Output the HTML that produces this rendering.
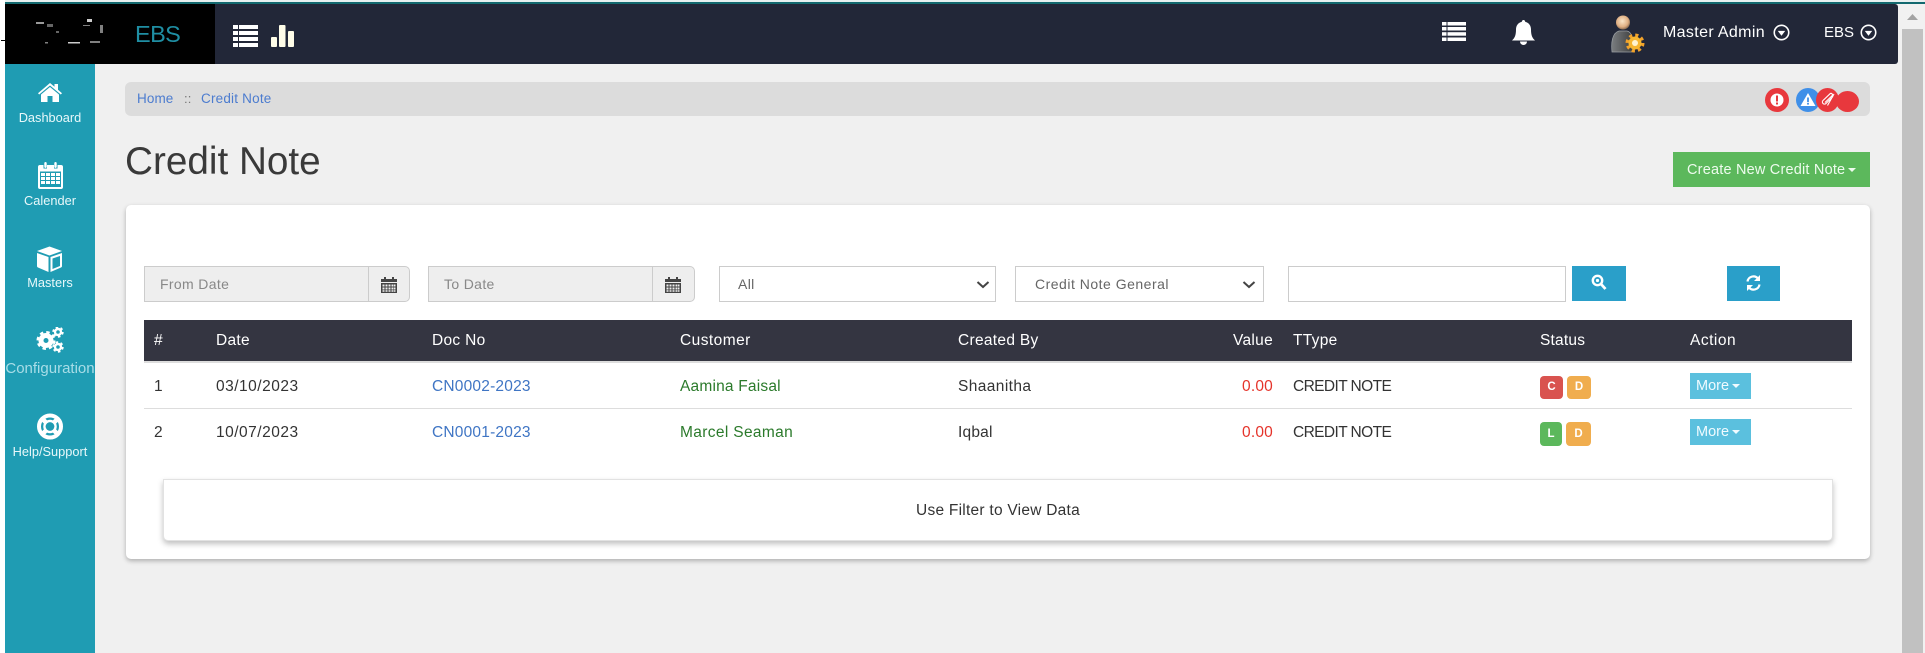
<!DOCTYPE html>
<html>
<head>
<meta charset="utf-8">
<title>Credit Note</title>
<style>
html,body{margin:0;padding:0;width:1925px;height:653px;overflow:hidden;background:#f0f0f0;font-family:"Liberation Sans",sans-serif;color:#333}
div,a,span.t,svg{position:absolute}
.t{position:absolute;white-space:nowrap;line-height:20px;height:20px;font-size:15.5px;letter-spacing:.2px}
.box{box-sizing:border-box}
.side{color:#e8f8fa;font-size:12.8px;text-align:center;left:5px;width:90px;letter-spacing:0}
.th{color:#fff;font-size:15.5px;letter-spacing:.3px}
.inp{box-sizing:border-box;background:#eee;border:1px solid #ccc;height:36px;top:266px}
.sel{box-sizing:border-box;background:#fff;border:1px solid #ccc;height:36px;top:266px}
.ph{color:#888;font-size:14px;letter-spacing:.35px}
.bdg{border-radius:4px;color:#fff;font-size:11.5px;font-weight:bold;text-align:center;box-sizing:border-box}
.more{background:#5bc0de;color:#f0fbff;font-size:14.5px;left:1690px;width:61px;height:26px;line-height:27px;padding-left:6px;box-sizing:border-box;white-space:nowrap}
.caret{display:inline-block;width:0;height:0;border-left:4px solid transparent;border-right:4px solid transparent;border-top:4px solid currentColor;vertical-align:2px;margin-left:3px}
.blue{background:#2a9fc9;top:266px;height:36px}
</style>
</head>
<body>
<!-- top strip -->
<div style="left:0;top:0;width:1925px;height:2px;background:#e8f0f0"></div>
<div style="left:5px;top:2px;width:1920px;height:2px;background:#13696f"></div>
<div style="left:0;top:0;width:5px;height:653px;background:#fff"></div>

<!-- navbar -->
<div style="left:5px;top:4px;width:1893px;height:60px;background:#222738;border-radius:0 3px 3px 0"></div>
<div style="left:5px;top:4px;width:210px;height:60px;background:#000"></div>
<div style="left:1px;top:40px;width:6px;height:1px;background:#000"></div>
<svg style="left:30px;top:15px" width="80" height="35" viewBox="0 0 80 35">
<g fill="#fff"><rect x="6" y="7" width="8" height="2" opacity=".6"/><rect x="17" y="9" width="6" height="3" opacity=".4"/><rect x="57" y="4" width="5" height="3" opacity=".8"/><rect x="53" y="10" width="7" height="1" opacity=".5"/><rect x="70" y="10" width="3" height="8" opacity=".5"/><rect x="38" y="27" width="12" height="1.5" opacity=".8"/><rect x="15" y="27" width="3" height="1.5" opacity=".5"/><rect x="60" y="26" width="10" height="2" opacity=".5"/><rect x="26" y="16" width="3" height="2" opacity=".4"/></g>
</svg>
<span class="t" style="left:135px;top:24px;font-size:23.5px;color:#1f8ea3;letter-spacing:-.6px">EBS</span>

<svg style="left:233px;top:25px" width="25" height="22" viewBox="0 0 25 22" fill="#fff">
<rect x="0" y="0" width="5" height="4"/><rect x="6" y="0" width="19" height="4"/>
<rect x="0" y="6" width="5" height="4"/><rect x="6" y="6" width="19" height="4"/>
<rect x="0" y="12" width="5" height="4"/><rect x="6" y="12" width="19" height="4"/>
<rect x="0" y="18" width="5" height="4"/><rect x="6" y="18" width="19" height="4"/>
</svg>
<svg style="left:271px;top:25px" width="23" height="22" viewBox="0 0 23 22" fill="#fffde8">
<rect x="0" y="12" width="6" height="10" rx="1"/><rect x="8" y="0" width="6.5" height="22" rx="1"/><rect x="17" y="6" width="6" height="16" rx="1"/>
</svg>

<svg style="left:1442px;top:22px" width="24" height="19" viewBox="0 0 24 19" fill="#fff">
<rect x="0" y="0" width="4.5" height="3.5"/><rect x="5.5" y="0" width="18.5" height="3.5"/>
<rect x="0" y="5" width="4.5" height="3.5"/><rect x="5.5" y="5" width="18.5" height="3.5"/>
<rect x="0" y="10.2" width="4.5" height="3.5"/><rect x="5.5" y="10.2" width="18.5" height="3.5"/>
<rect x="0" y="15.5" width="4.5" height="3.5"/><rect x="5.5" y="15.5" width="18.5" height="3.5"/>
</svg>
<svg style="left:1512px;top:20px" width="23" height="25" viewBox="0 0 23 25" fill="#fff">
<path d="M11.5 0a1.7 1.7 0 0 1 1.7 1.9C17 2.7 19 5.8 19 9.5c0 6 1.4 8.500 4 11H0c2.600-2.500 4-5 4-11 0-3.700 2-6.800 5.800-7.600A1.700 1.700 0 0 1 11.500 0z"/>
<path d="M8 21.500h7a3.500 3.500 0 0 1-7 0z"/>
</svg>

<svg style="left:1611px;top:15px" width="36" height="41" viewBox="0 0 36 41">
<defs>
<radialGradient id="hd" cx=".45" cy=".4" r=".6"><stop offset="0" stop-color="#fbe6c8"/><stop offset=".7" stop-color="#dfae82"/><stop offset="1" stop-color="#8a6b50"/></radialGradient>
<linearGradient id="bd" x1="0" y1="0" x2="1" y2="0"><stop offset="0" stop-color="#7a7d80"/><stop offset="1" stop-color="#3c3d3d"/></linearGradient>
</defs>
<circle cx="12" cy="7.500" r="7" fill="url(#hd)"/>
<path d="M1 37c-1-9 0-19 7-21h8c5 1 7 8 7 21z" fill="url(#bd)" stroke="#9a9ea2" stroke-width=".7"/>
<circle cx="24" cy="28" r="7.500" fill="none" stroke="#f2a22a" stroke-width="4" stroke-dasharray="3 2.890"/>
<circle cx="24" cy="28" r="6.500" fill="#f6b632"/>
<circle cx="24" cy="28" r="3" fill="#fff3d0"/>
</svg>
<span class="t" style="left:1663px;top:23px;color:#fff;font-size:16px;letter-spacing:.35px">Master Admin</span>
<svg style="left:1773px;top:24px" width="17" height="17" viewBox="0 0 16 16"><circle cx="8" cy="8" r="6.800" fill="none" stroke="#fff" stroke-width="1.500"/><path d="M4.500 6.500h7L8 11z" fill="#fff"/></svg>
<span class="t" style="left:1824px;top:23px;color:#fff;font-size:15px;letter-spacing:0">EBS</span>
<svg style="left:1860px;top:24px" width="17" height="17" viewBox="0 0 16 16"><circle cx="8" cy="8" r="6.800" fill="none" stroke="#fff" stroke-width="1.500"/><path d="M4.500 6.500h7L8 11z" fill="#fff"/></svg>

<!-- scrollbar -->
<div style="left:1900px;top:4px;width:25px;height:649px;background:#f1f1f1"></div>
<div style="left:1902px;top:29px;width:21px;height:624px;background:#c1c1c1"></div>
<svg style="left:1904px;top:13px" width="17" height="8" viewBox="0 0 17 8"><path d="M8.500 1L14 7H3z" fill="#a3a3a3"/></svg>

<!-- sidebar -->
<div style="left:5px;top:64px;width:90px;height:589px;background:#1f9cb3"></div>
<svg style="left:38px;top:83px" width="24" height="19" viewBox="0 0 24 19" fill="#fff">
<path d="M12 0L16.500 3.800V1H20V6.800L24 10.200 22.800 11.500 12 2.500 1.200 11.500 0 10.200z"/>
<path d="M12 4L21 11.500V19H14.500V13H9.500V19H3V11.500z"/>
</svg>
<span class="t side" style="top:108px">Dashboard</span>
<svg style="left:38px;top:162px" width="25" height="27" viewBox="0 0 25 27" fill="#fff">
<path fill-rule="evenodd" d="M2 3H5.500V6.500H9V3H16V6.500H19.500V3H23A2 2 0 0 1 25 5V25A2 2 0 0 1 23 27H2A2 2 0 0 1 0 25V5A2 2 0 0 1 2 3ZM2 9.500V25H23V9.500Z"/>
<rect x="6.300" y="0" width="2.400" height="6" rx="1.200"/><rect x="16.300" y="0" width="2.400" height="6" rx="1.200"/>
<path d="M3 11h4v3H3zM8 11h4v3H8zM13 11h4v3h-4zM18 11h4v3h-4zM3 15h4v3H3zM8 15h4v3H8zM13 15h4v3h-4zM18 15h4v3h-4zM3 19h4v3H3zM8 19h4v3H8zM13 19h4v3h-4zM18 19h4v3h-4z"/>
</svg>
<span class="t side" style="top:191px">Calender</span>
<svg style="left:37px;top:246px" width="25" height="26" viewBox="0 0 25 26" fill="#fff">
<path d="M12.500 0L25 4.500 12.500 9 0 4.500z" transform="translate(0 .5)"/>
<path d="M0 7L11.500 11V26L1 21.500A1.500 1.500 0 0 1 0 20zM25 7L13.500 11V26L24 21.500A1.500 1.500 0 0 0 25 20z"/>
<path d="M15.500 12.500L23 10V20L15.500 23z" fill="#1f9cb3"/>
</svg>
<span class="t side" style="top:273px">Masters</span>
<svg style="left:36px;top:327px" width="28" height="26" viewBox="0 0 28 26">
<circle cx="10" cy="13.500" r="5" fill="none" stroke="#fff" stroke-width="5"/>
<circle cx="10" cy="13.500" r="8.200" fill="none" stroke="#fff" stroke-width="2.600" stroke-dasharray="3.400 3.040"/>
<circle cx="22" cy="5" r="3" fill="none" stroke="#fff" stroke-width="2.400"/>
<circle cx="22" cy="5" r="4.800" fill="none" stroke="#fff" stroke-width="1.800" stroke-dasharray="2.500 2.530"/>
<circle cx="22" cy="20" r="3" fill="none" stroke="#fff" stroke-width="2.400"/>
<circle cx="22" cy="20" r="4.800" fill="none" stroke="#fff" stroke-width="1.800" stroke-dasharray="2.500 2.530"/>
</svg>
<span class="t side" style="top:359px;color:#a8dde7;font-size:15px">Configuration</span>
<svg style="left:37px;top:413px" width="26" height="27" viewBox="0 0 26 26">
<circle cx="13" cy="13" r="11" fill="none" stroke="#fff" stroke-width="4"/>
<circle cx="13" cy="13" r="5.500" fill="none" stroke="#fff" stroke-width="2.500"/>
<g stroke="#fff" stroke-width="4.500"><path d="M5 5L9 9M21 5L17 9M5 21L9 17M21 21L17 17"/></g>
<circle cx="13" cy="13" r="4.300" fill="#1f9cb3"/>
</svg>
<span class="t side" style="top:442px">Help/Support</span>

<!-- breadcrumb -->
<div style="left:125px;top:82px;width:1745px;height:34px;background:#dcdcdc;border-radius:6px"></div>
<span class="t" style="left:137px;top:89px;font-size:13.5px;letter-spacing:.1px;color:#4c7ccf">Home</span>
<span class="t" style="left:184px;top:89px;font-size:13px;color:#777">::</span>
<span class="t" style="left:201px;top:89px;font-size:13.5px;letter-spacing:.2px;color:#4c7ccf">Credit Note</span>

<div style="left:1765px;top:88px;width:24px;height:24px;border-radius:50%;background:#e8383d"></div>
<svg style="left:1770px;top:93px" width="14" height="14" viewBox="0 0 14 14"><circle cx="7" cy="7" r="6.500" fill="#fff"/><rect x="6" y="2.500" width="2" height="6" fill="#e8383d"/><rect x="6" y="9.500" width="2" height="2" fill="#e8383d"/></svg>
<div style="left:1796px;top:88px;width:24px;height:24px;border-radius:50%;background:#3f8fe8"></div>
<svg style="left:1800px;top:92px" width="16" height="15" viewBox="0 0 16 15"><path d="M8 1L15.500 14H.5z" fill="#fff"/><rect x="7.100" y="5.500" width="1.800" height="4.500" fill="#3f8fe8"/><rect x="7.100" y="10.800" width="1.800" height="1.800" fill="#3f8fe8"/></svg>
<div style="left:1836px;top:91px;width:23px;height:21px;border-radius:50%;background:#e8383d"></div>
<div style="left:1816px;top:88px;width:23px;height:24px;border-radius:50%;background:#e8383d"></div>
<svg style="left:1820px;top:92px" width="15" height="15" viewBox="0 0 15 15"><path d="M13 4.500L6 11.500a2 2 0 0 1-3-3L10 1.800a1.200 1.200 0 0 1 2 2L5 10.500M14 2L7.500 13.500" fill="none" stroke="#fff" stroke-width="1.100"/></svg>

<!-- title -->
<span class="t" style="left:125px;top:142px;height:40px;line-height:40px;font-size:38.7px;letter-spacing:0;color:#3a3a3a;font-weight:normal">Credit Note</span>

<div class="box" style="left:1673px;top:152px;width:197px;height:35px;background:#5cb85c"></div>
<span class="t" style="left:1687px;top:160px;color:#eefbee;font-size:14.5px;letter-spacing:.2px">Create New Credit Note<span class="caret" style="position:static"></span></span>

<!-- card -->
<div class="box" style="left:126px;top:205px;width:1744px;height:354px;background:#fff;border-radius:5px;box-shadow:0 2px 5px rgba(0,0,0,.28)"></div>

<!-- filters -->
<div class="inp" style="left:144px;width:266px;border-radius:0 5px 5px 0"></div>
<div style="left:368px;top:266px;width:1px;height:36px;background:#ccc"></div>
<span class="t ph" style="left:160px;top:274px">From Date</span>
<svg style="left:381px;top:276px" width="16" height="17" viewBox="0 0 16 17" fill="#444"><path d="M0 3h3V1h2v2h6V1h2v2h3v3H0z"/><path fill-rule="evenodd" d="M0 7h16v10H0zM1.500 8.500v2h2v-2zM4.500 8.500v2h2v-2zM7.500 8.500v2h2v-2zM10.500 8.500v2h2v-2zM13 8.500v2h1.500v-2zM1.500 11.500v2h2v-2zM4.500 11.500v2h2v-2zM7.500 11.500v2h2v-2zM10.500 11.500v2h2v-2zM13 11.500v2h1.500v-2zM1.500 14.200v1.500h2v-1.500zM4.500 14.200v1.500h2v-1.500zM7.500 14.200v1.500h2v-1.500zM10.500 14.200v1.500h2v-1.500zM13 14.200v1.500h1.500v-1.500z"/></svg>

<div class="inp" style="left:428px;width:267px;border-radius:0 5px 5px 0"></div>
<div style="left:652px;top:266px;width:1px;height:36px;background:#ccc"></div>
<span class="t ph" style="left:444px;top:274px">To Date</span>
<svg style="left:665px;top:276px" width="16" height="17" viewBox="0 0 16 17" fill="#444"><path d="M0 3h3V1h2v2h6V1h2v2h3v3H0z"/><path fill-rule="evenodd" d="M0 7h16v10H0zM1.500 8.500v2h2v-2zM4.500 8.500v2h2v-2zM7.500 8.500v2h2v-2zM10.500 8.500v2h2v-2zM13 8.500v2h1.500v-2zM1.500 11.500v2h2v-2zM4.500 11.500v2h2v-2zM7.500 11.500v2h2v-2zM10.500 11.500v2h2v-2zM13 11.500v2h1.500v-2zM1.500 14.200v1.500h2v-1.500zM4.500 14.200v1.500h2v-1.500zM7.500 14.200v1.500h2v-1.500zM10.500 14.200v1.500h2v-1.500zM13 14.200v1.500h1.500v-1.500z"/></svg>

<div class="sel" style="left:719px;width:277px"></div>
<span class="t ph" style="left:738px;top:274px;color:#666">All</span>
<svg style="left:976px;top:280px" width="14" height="9" viewBox="0 0 14 9"><path d="M1.500 2L7 7l5.500-5" fill="none" stroke="#444" stroke-width="2"/></svg>

<div class="sel" style="left:1015px;width:249px"></div>
<span class="t ph" style="left:1035px;top:274px;color:#666;letter-spacing:.5px">Credit Note General</span>
<svg style="left:1242px;top:280px" width="14" height="9" viewBox="0 0 14 9"><path d="M1.500 2L7 7l5.500-5" fill="none" stroke="#444" stroke-width="2"/></svg>

<div class="sel" style="left:1288px;width:278px"></div>

<div class="blue" style="left:1572px;width:54px;height:35px"></div>
<svg style="left:1591px;top:274px" width="16" height="17" viewBox="0 0 16 17"><circle cx="6.500" cy="6.500" r="4.700" fill="none" stroke="#fff" stroke-width="2.400"/><circle cx="6.500" cy="6.500" r="1.600" fill="#fff"/><path d="M10 10l4.500 5" stroke="#fff" stroke-width="2.800"/></svg>
<div class="blue" style="left:1727px;width:53px;height:35px"></div>
<svg style="left:1746px;top:275px" width="15" height="16" viewBox="0 0 15 16"><path d="M1.500 6.500A6 6 0 0 1 12 3.500M13.500 9.500A6 6 0 0 1 3 12.500" fill="none" stroke="#fff" stroke-width="2.200"/><path d="M14 0v6H8zM1 16v-6h6z" fill="#fff"/></svg>

<!-- table -->
<div style="left:144px;top:320px;width:1708px;height:41px;background:#343541"></div>
<div style="left:144px;top:361px;width:1708px;height:2px;background:#ddd"></div>
<div style="left:144px;top:408px;width:1708px;height:1px;background:#ddd"></div>

<span class="t th" style="left:154px;top:331px">#</span>
<span class="t th" style="left:216px;top:331px">Date</span>
<span class="t th" style="left:432px;top:331px">Doc No</span>
<span class="t th" style="left:680px;top:331px;letter-spacing:.45px">Customer</span>
<span class="t th" style="left:958px;top:331px">Created By</span>
<span class="t th" style="right:652px;top:331px">Value</span>
<span class="t th" style="left:1293px;top:331px">TType</span>
<span class="t th" style="left:1540px;top:331px;letter-spacing:.2px">Status</span>
<span class="t th" style="left:1690px;top:331px;letter-spacing:.5px">Action</span>

<span class="t" style="left:154px;top:377px">1</span>
<span class="t" style="left:216px;top:377px;letter-spacing:.5px">03/10/2023</span>
<span class="t" style="left:432px;top:377px;color:#3f75c4">CN0002-2023</span>
<span class="t" style="left:680px;top:377px;color:#2b7a2b">Aamina Faisal</span>
<span class="t" style="left:958px;top:377px;letter-spacing:.4px">Shaanitha</span>
<span class="t" style="right:652px;top:377px;color:#e5332a">0.00</span>
<span class="t" style="left:1293px;top:377px;letter-spacing:-.6px">CREDIT NOTE</span>
<div class="bdg" style="left:1540px;top:376px;width:23px;height:23px;line-height:23px;background:#d9534f">C</div>
<div class="bdg" style="left:1567px;top:376px;width:24px;height:23px;line-height:23px;background:#f0ad4e">D</div>
<div class="more" style="top:373px">More<span class="caret" style="position:static"></span></div>

<span class="t" style="left:154px;top:423px">2</span>
<span class="t" style="left:216px;top:423px;letter-spacing:.5px">10/07/2023</span>
<span class="t" style="left:432px;top:423px;color:#3f75c4">CN0001-2023</span>
<span class="t" style="left:680px;top:423px;color:#2b7a2b;letter-spacing:.35px">Marcel Seaman</span>
<span class="t" style="left:958px;top:423px">Iqbal</span>
<span class="t" style="right:652px;top:423px;color:#e5332a">0.00</span>
<span class="t" style="left:1293px;top:423px;letter-spacing:-.6px">CREDIT NOTE</span>
<div class="bdg" style="left:1540px;top:422px;width:22px;height:24px;line-height:24px;background:#5cb85c">L</div>
<div class="bdg" style="left:1566px;top:422px;width:25px;height:24px;line-height:24px;background:#f0ad4e">D</div>
<div class="more" style="top:419px">More<span class="caret" style="position:static"></span></div>

<!-- filter message -->
<div class="box" style="left:163px;top:479px;width:1670px;height:62px;background:#fff;border:1px solid #e2e2e2;border-radius:0 0 5px 5px;box-shadow:0 3px 6px rgba(0,0,0,.25)"></div>
<span class="t" style="left:163px;width:1670px;text-align:center;top:501px;font-size:15.5px;letter-spacing:.25px">Use Filter to View Data</span>
</body>
</html>
